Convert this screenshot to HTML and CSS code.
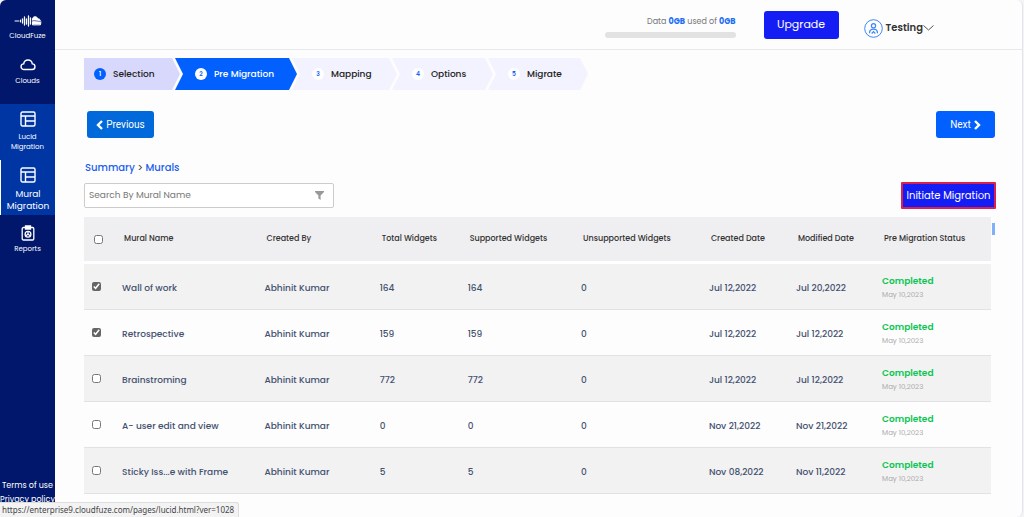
FILE: index.html
```html
<!DOCTYPE html>
<html lang="en">
<head>
    <meta charset="UTF-8">
    <meta name="viewport" content="width=device-width, initial-scale=1.0">
    <title>CloudFuze</title>
    <link rel="stylesheet" href="styles.css">
</head>
<body>
    <div class="app">
        <nav class="sidebar">
            <a href="#" class="nav-item brand">
                <svg width="28" height="12" viewBox="0 0 28 12" fill="none" stroke="#fff" stroke-linecap="round">
                    <path d="M1 6h4M6.500 5v2" stroke-width="1"/>
                    <path d="M8.500 4v4M10.500 2v8M12.500 4v5M14.500 1v10M16.500 3v6" stroke-width="1.300"/>
                    <path d="M18.500 9.500V3.500C19.500 1 23 1 24 4c2.500-.3 3.500 2.500 2.500 5.500z" fill="#fff" stroke-width="1"/>
                    <path d="M18 6c3-1.500 5 1 9 .3" stroke="#00176b" stroke-width=".6"/>
                </svg>
                <span>CloudFuze</span>
            </a>
            <a href="#" class="nav-item clouds">
                <svg width="16" height="12" viewBox="0 0 16 12" fill="none" stroke="#fff" stroke-width="1.400">
                    <path d="M4 10.500a2.800 2.800 0 0 1-.3-5.600C4 2.600 5.800 1 8 1s4 1.600 4.300 3.900a2.800 2.800 0 0 1-.3 5.600z"/>
                </svg>
                <span>Clouds</span>
            </a>
            <a href="#" class="nav-item group">
                <svg width="16" height="16" viewBox="0 0 16 16" fill="none" stroke="#fff" stroke-width="1.400">
                    <rect x="1" y="1" width="14" height="14" rx="1.500"/>
                    <path d="M1 5h14M5.500 5v10M5.500 10H15"/>
                </svg>
                <span>Lucid<br>Migration</span>
            </a>
            <a href="#" class="nav-item group current">
                <svg width="16" height="16" viewBox="0 0 16 16" fill="none" stroke="#fff" stroke-width="1.400">
                    <rect x="1" y="1" width="14" height="14" rx="1.500"/>
                    <path d="M1 5h14M5.500 5v10M5.500 10H15"/>
                </svg>
                <span>Mural<br>Migration</span>
            </a>
            <a href="#" class="nav-item reports">
                <svg width="14" height="16" viewBox="0 0 14 16" fill="none" stroke="#fff" stroke-width="1.300">
                    <rect x="1.200" y="2.500" width="11.600" height="12.500" rx="1.200"/>
                    <path d="M4.500 1h5v3h-5z" fill="#fff"/>
                    <circle cx="7" cy="9.200" r="2.900"/>
                    <path d="M7 9.200V6.500M7 9.200l2.300 1.500M7 9.200l-2.300 1.500"/>
                </svg>
                <span>Reports</span>
            </a>
            <div class="legal">
                <a href="#">Terms of use</a>
                <a href="#">Privacy policy</a>
            </div>
        </nav>

        <div class="page">
            <header class="topbar">
                <div class="usage">
                    <div>Data <b>0GB</b> used of <b>0GB</b></div>
                    <div class="usage-bar"></div>
                </div>
                <button class="btn btn-upgrade">Upgrade</button>
                <button class="account">
                    <svg width="19" height="19" viewBox="0 0 19 19" fill="none" stroke="#3d86f5">
                        <circle cx="9.500" cy="9.500" r="8.800" stroke-width="1"/>
                        <circle cx="9.500" cy="6.700" r="2.100" stroke-width="1.200"/>
                        <path d="M5.500 14.200c0-5.400 8-5.400 8 0M7.700 14.500l1.800-1.800 1.800 1.800" stroke-width="1.200"/>
                    </svg>
                    <span>Testing</span>
                    <svg width="11" height="6" viewBox="0 0 11 6" fill="none" stroke="#555"><path d="M.5.5l5 4.500 5-4.500"/></svg>
                </button>
            </header>

            <main class="content">
                <ol class="steps">
                    <li class="step first done"><span class="num">1</span>Selection</li>
                    <li class="step active"><span class="num">2</span>Pre Migration</li>
                    <li class="step"><span class="num">3</span>Mapping</li>
                    <li class="step"><span class="num">4</span>Options</li>
                    <li class="step"><span class="num">5</span>Migrate</li>
                </ol>

                <div class="pager">
                    <button class="btn btn-prev">
                        <svg width="7" height="10" viewBox="0 0 7 10" fill="none" stroke="#fff" stroke-width="2.400"><path d="M6 1L2 5l4 4"/></svg>
                        Previous
                    </button>
                    <button class="btn btn-next">
                        Next
                        <svg width="7" height="10" viewBox="0 0 7 10" fill="none" stroke="#fff" stroke-width="2.400"><path d="M1 1l4 4-4 4"/></svg>
                    </button>
                </div>

                <div class="breadcrumb"><a href="#">Summary</a> &gt; <a href="#">Murals</a></div>

                <div class="toolbar">
                    <div class="search">
                        <input type="text" placeholder="Search By Mural Name" aria-label="Search By Mural Name">
                        <svg width="9" height="9" viewBox="0 0 9 9" fill="#999"><path d="M0 0h9v1L5.600 4.600V9L3.400 7.500V4.600L0 1z"/></svg>
                    </div>
                    <button class="btn btn-initiate">Initiate Migration</button>
                </div>

                <div class="table-wrap">
                    <table class="murals">
                        <colgroup>
                            <col class="c-check"><col class="c-name"><col class="c-by"><col class="c-total"><col class="c-supported">
                            <col class="c-unsupported"><col class="c-created"><col class="c-modified"><col class="c-status">
                        </colgroup>
                        <thead>
                            <tr>
                                <th><input type="checkbox" aria-label="Select all"></th>
                                <th>Mural Name</th>
                                <th>Created By</th>
                                <th>Total Widgets</th>
                                <th>Supported Widgets</th>
                                <th>Unsupported Widgets</th>
                                <th>Created Date</th>
                                <th>Modified Date</th>
                                <th>Pre Migration Status</th>
                            </tr>
                        </thead>
                        <tbody>
                            <tr>
                                <td><input type="checkbox" aria-label="Wall of work" checked></td>
                                <td>Wall of work</td>
                                <td>Abhinit Kumar</td>
                                <td>164</td>
                                <td>164</td>
                                <td>0</td>
                                <td>Jul 12,2022</td>
                                <td>Jul 20,2022</td>
                                <td><div class="status">Completed</div><div class="date">May 10,2023</div></td>
                            </tr>
                            <tr>
                                <td><input type="checkbox" aria-label="Retrospective" checked></td>
                                <td>Retrospective</td>
                                <td>Abhinit Kumar</td>
                                <td>159</td>
                                <td>159</td>
                                <td>0</td>
                                <td>Jul 12,2022</td>
                                <td>Jul 12,2022</td>
                                <td><div class="status">Completed</div><div class="date">May 10,2023</div></td>
                            </tr>
                            <tr>
                                <td><input type="checkbox" aria-label="Brainstroming"></td>
                                <td>Brainstroming</td>
                                <td>Abhinit Kumar</td>
                                <td>772</td>
                                <td>772</td>
                                <td>0</td>
                                <td>Jul 12,2022</td>
                                <td>Jul 12,2022</td>
                                <td><div class="status">Completed</div><div class="date">May 10,2023</div></td>
                            </tr>
                            <tr>
                                <td><input type="checkbox" aria-label="A- user edit and view"></td>
                                <td>A- user edit and view</td>
                                <td>Abhinit Kumar</td>
                                <td>0</td>
                                <td>0</td>
                                <td>0</td>
                                <td>Nov 21,2022</td>
                                <td>Nov 21,2022</td>
                                <td><div class="status">Completed</div><div class="date">May 10,2023</div></td>
                            </tr>
                            <tr>
                                <td><input type="checkbox" aria-label="Sticky Iss...e with Frame"></td>
                                <td>Sticky Iss...e with Frame</td>
                                <td>Abhinit Kumar</td>
                                <td>5</td>
                                <td>5</td>
                                <td>0</td>
                                <td>Nov 08,2022</td>
                                <td>Nov 11,2022</td>
                                <td><div class="status">Completed</div><div class="date">May 10,2023</div></td>
                            </tr>
                        </tbody>
                    </table>
                    <div class="scroll-thumb"></div>
                </div>
            </main>
        </div>
    </div>

    <div class="link-status">https://enterprise9.cloudfuze.com/pages/lucid.html?ver=1028</div>
</body>
</html>
```
FILE: styles.css
```css
* {
    margin: 0;
    padding: 0;
    box-sizing: border-box;
}

body {
    background-color: #f4f4f6;
    color: #333;
    font-family: Poppins, Inter, sans-serif;
    font-size: 9px;
    line-height: 12px;
}

a {
    text-decoration: none;
}

button {
    border: none;
    font-family: inherit;
    cursor: pointer;
}

.app {
    display: flex;
    min-height: 100vh;
    margin-right: 1px;
    border-right: 1px solid #e4e4e8;
    border-radius: 6px;
    overflow: hidden;
    background-color: #fdfdfd;
}

/* Sidebar */
.sidebar {
    display: flex;
    flex-direction: column;
    flex: 0 0 55px;
    padding-top: 15px;
    background-color: #00176b;
}

.nav-item {
    display: flex;
    flex-direction: column;
    align-items: center;
    gap: 4px;
    color: #fff;
    font-size: 7px;
    line-height: 10px;
    text-align: center;
}

.brand,
.clouds {
    padding-bottom: 18px;
}

.clouds {
    gap: 5px;
}

.group {
    gap: 5px;
    padding: 7px 0 8px;
    background-color: #0035a4;
}

.current {
    border-left: 1px solid #fff;
    font-size: 9px;
    line-height: 12px;
    padding-bottom: 3px;
}

.reports {
    padding-top: 10px;
    gap: 3px;
}

.legal {
    display: flex;
    flex-direction: column;
    gap: 2px;
    margin-top: auto;
    padding-bottom: 11px;
    text-align: center;
}

.legal a {
    color: #fff;
    font-size: 8px;
    line-height: 12px;
    white-space: nowrap;
}

/* Top bar */
.page {
    flex: 1;
    min-width: 0;
}

.topbar {
    display: flex;
    justify-content: flex-end;
    align-items: center;
    height: 50px;
    padding-right: 88px;
    border-bottom: 1px solid #e9e9ec;
}

.usage {
    width: 131px;
    margin: 4px 28px 0 0;
    color: #777;
    font-size: 8px;
    text-align: right;
}

.usage b {
    color: #1a6df5;
}

.usage-bar {
    height: 6px;
    margin-top: 4px;
    border-radius: 3px;
    background-color: #e2e2e2;
}

.btn {
    display: flex;
    align-items: center;
    justify-content: center;
    height: 27px;
    border-radius: 3px;
    color: #fff;
    font-size: 10px;
}

.btn-upgrade {
    width: 75px;
    height: 28px;
    margin-right: 25px;
    background-color: #151df5;
    font-size: 11px;
}

.account {
    display: flex;
    align-items: center;
    gap: 3px;
    margin-top: 7px;
    background: none;
    color: #333;
    font-size: 10px;
    font-weight: 600;
}

.account svg:last-child {
    margin-left: -3px;
}

/* Content */
.content {
    padding: 8px 31px 22px 29px;
}

.steps {
    display: grid;
    grid-template-columns: 91px 117px 100px 96px 100px;
    list-style: none;
}

.step {
    display: flex;
    align-items: center;
    gap: 7px;
    height: 32px;
    margin-right: -5px;
    padding-left: 20px;
    background-color: #f3f2ff;
    clip-path: polygon(0 0, calc(100% - 8px) 0, 100% 50%, calc(100% - 8px) 100%, 0 100%, 8px 50%);
    color: #222;
    font-size: 9px;
    font-weight: 500;
    white-space: nowrap;
}

.step:last-child {
    margin-right: 0;
}

.step.first {
    padding-left: 10px;
    clip-path: polygon(0 0, calc(100% - 8px) 0, 100% 50%, calc(100% - 8px) 100%, 0 100%);
}

.step.done {
    background-color: #d8d8fd;
}

.step.active {
    background-color: #0261fe;
    color: #fff;
}

.num {
    width: 12px;
    height: 12px;
    border-radius: 50%;
    background-color: #fff;
    color: #1a5ff5;
    font-size: 6px;
    font-weight: 600;
    line-height: 12px;
    text-align: center;
}

.done .num {
    background-color: #0261fe;
    color: #fff;
}

.pager {
    display: flex;
    justify-content: space-between;
    margin: 21px -4px 0 3px;
}

.pager .btn {
    gap: 3px;
    font-family: Roboto, sans-serif;
}

.btn-prev {
    width: 67px;
    background-color: #0169d9;
}

.btn-next {
    width: 59px;
    background-color: #0261fe;
}

.breadcrumb {
    margin: 24px 0 0 1px;
    font-size: 10px;
    font-weight: 400;
}

.breadcrumb a {
    color: #2060ef;
    font-weight: 500;
}

.toolbar {
    display: flex;
    justify-content: space-between;
    align-items: center;
    margin: 8px -5px 0 0;
}

.search {
    display: flex;
    align-items: center;
    width: 250px;
    height: 25px;
    padding: 0 9px 0 4px;
    border: 1px solid #ccc;
    border-radius: 2px;
    background-color: #fff;
}

.search input {
    flex: 1;
    min-width: 0;
    border: none;
    outline: none;
    color: #555;
    font-family: inherit;
    font-size: 9px;
}

.search input::placeholder {
    color: #777;
}

.btn-initiate {
    width: 95px;
    border: 2px solid #d9204e;
    border-radius: 1px;
    background-color: #151df5;
    white-space: nowrap;
}

/* Murals table */
.table-wrap {
    position: relative;
    margin-top: 8px;
}

.murals {
    width: 100%;
    border-spacing: 0;
    table-layout: fixed;
}

.c-check { width: 4.2%; }
.c-name { width: 15.7%; }
.c-by { width: 12.7%; }
.c-total { width: 9.7%; }
.c-supported { width: 12.5%; }
.c-unsupported { width: 14.1%; }
.c-created { width: 9.6%; }
.c-modified { width: 9.5%; }
.c-status { width: 12%; }

.murals th,
.murals td {
    text-align: left;
    white-space: nowrap;
}

.murals th {
    height: 47px;
    padding-left: 2px;
    border-bottom: 3px solid #fff;
    background-color: #efeef0;
    color: #333;
    font-size: 8px;
    font-weight: 500;
}

.murals td {
    height: 46px;
    padding-top: 2px;
    border-bottom: 1px solid #e2e2e4;
    color: #44516f;
    font-weight: 500;
}

.murals tbody tr:nth-child(odd) {
    background-color: #f2f2f3;
}

.murals th:first-child {
    padding-left: 10px;
}

.murals td:first-child {
    padding: 0 0 0 8px;
}

.murals input {
    display: block;
    width: 9px;
    height: 9px;
    accent-color: #666;
}

.murals .status {
    color: #0cc653;
    font-weight: 600;
}

.murals .date {
    margin-top: 2px;
    color: #aaa;
    font-size: 7px;
    font-weight: 400;
}

.scroll-thumb {
    position: absolute;
    top: 6px;
    right: -4px;
    width: 3px;
    height: 12px;
    background-color: #80b0fa;
}

/* Link address shown over the bottom left corner */
.link-status {
    position: fixed;
    left: 0;
    bottom: 0;
    padding: 1px 4px 1px 2px;
    border: 1px solid #ddd;
    border-left: none;
    border-bottom: none;
    border-radius: 0 3px 0 0;
    background-color: #f3f3f4;
    color: #444;
    font-family: "Noto Sans", sans-serif;
    font-size: 8px;
}
```
